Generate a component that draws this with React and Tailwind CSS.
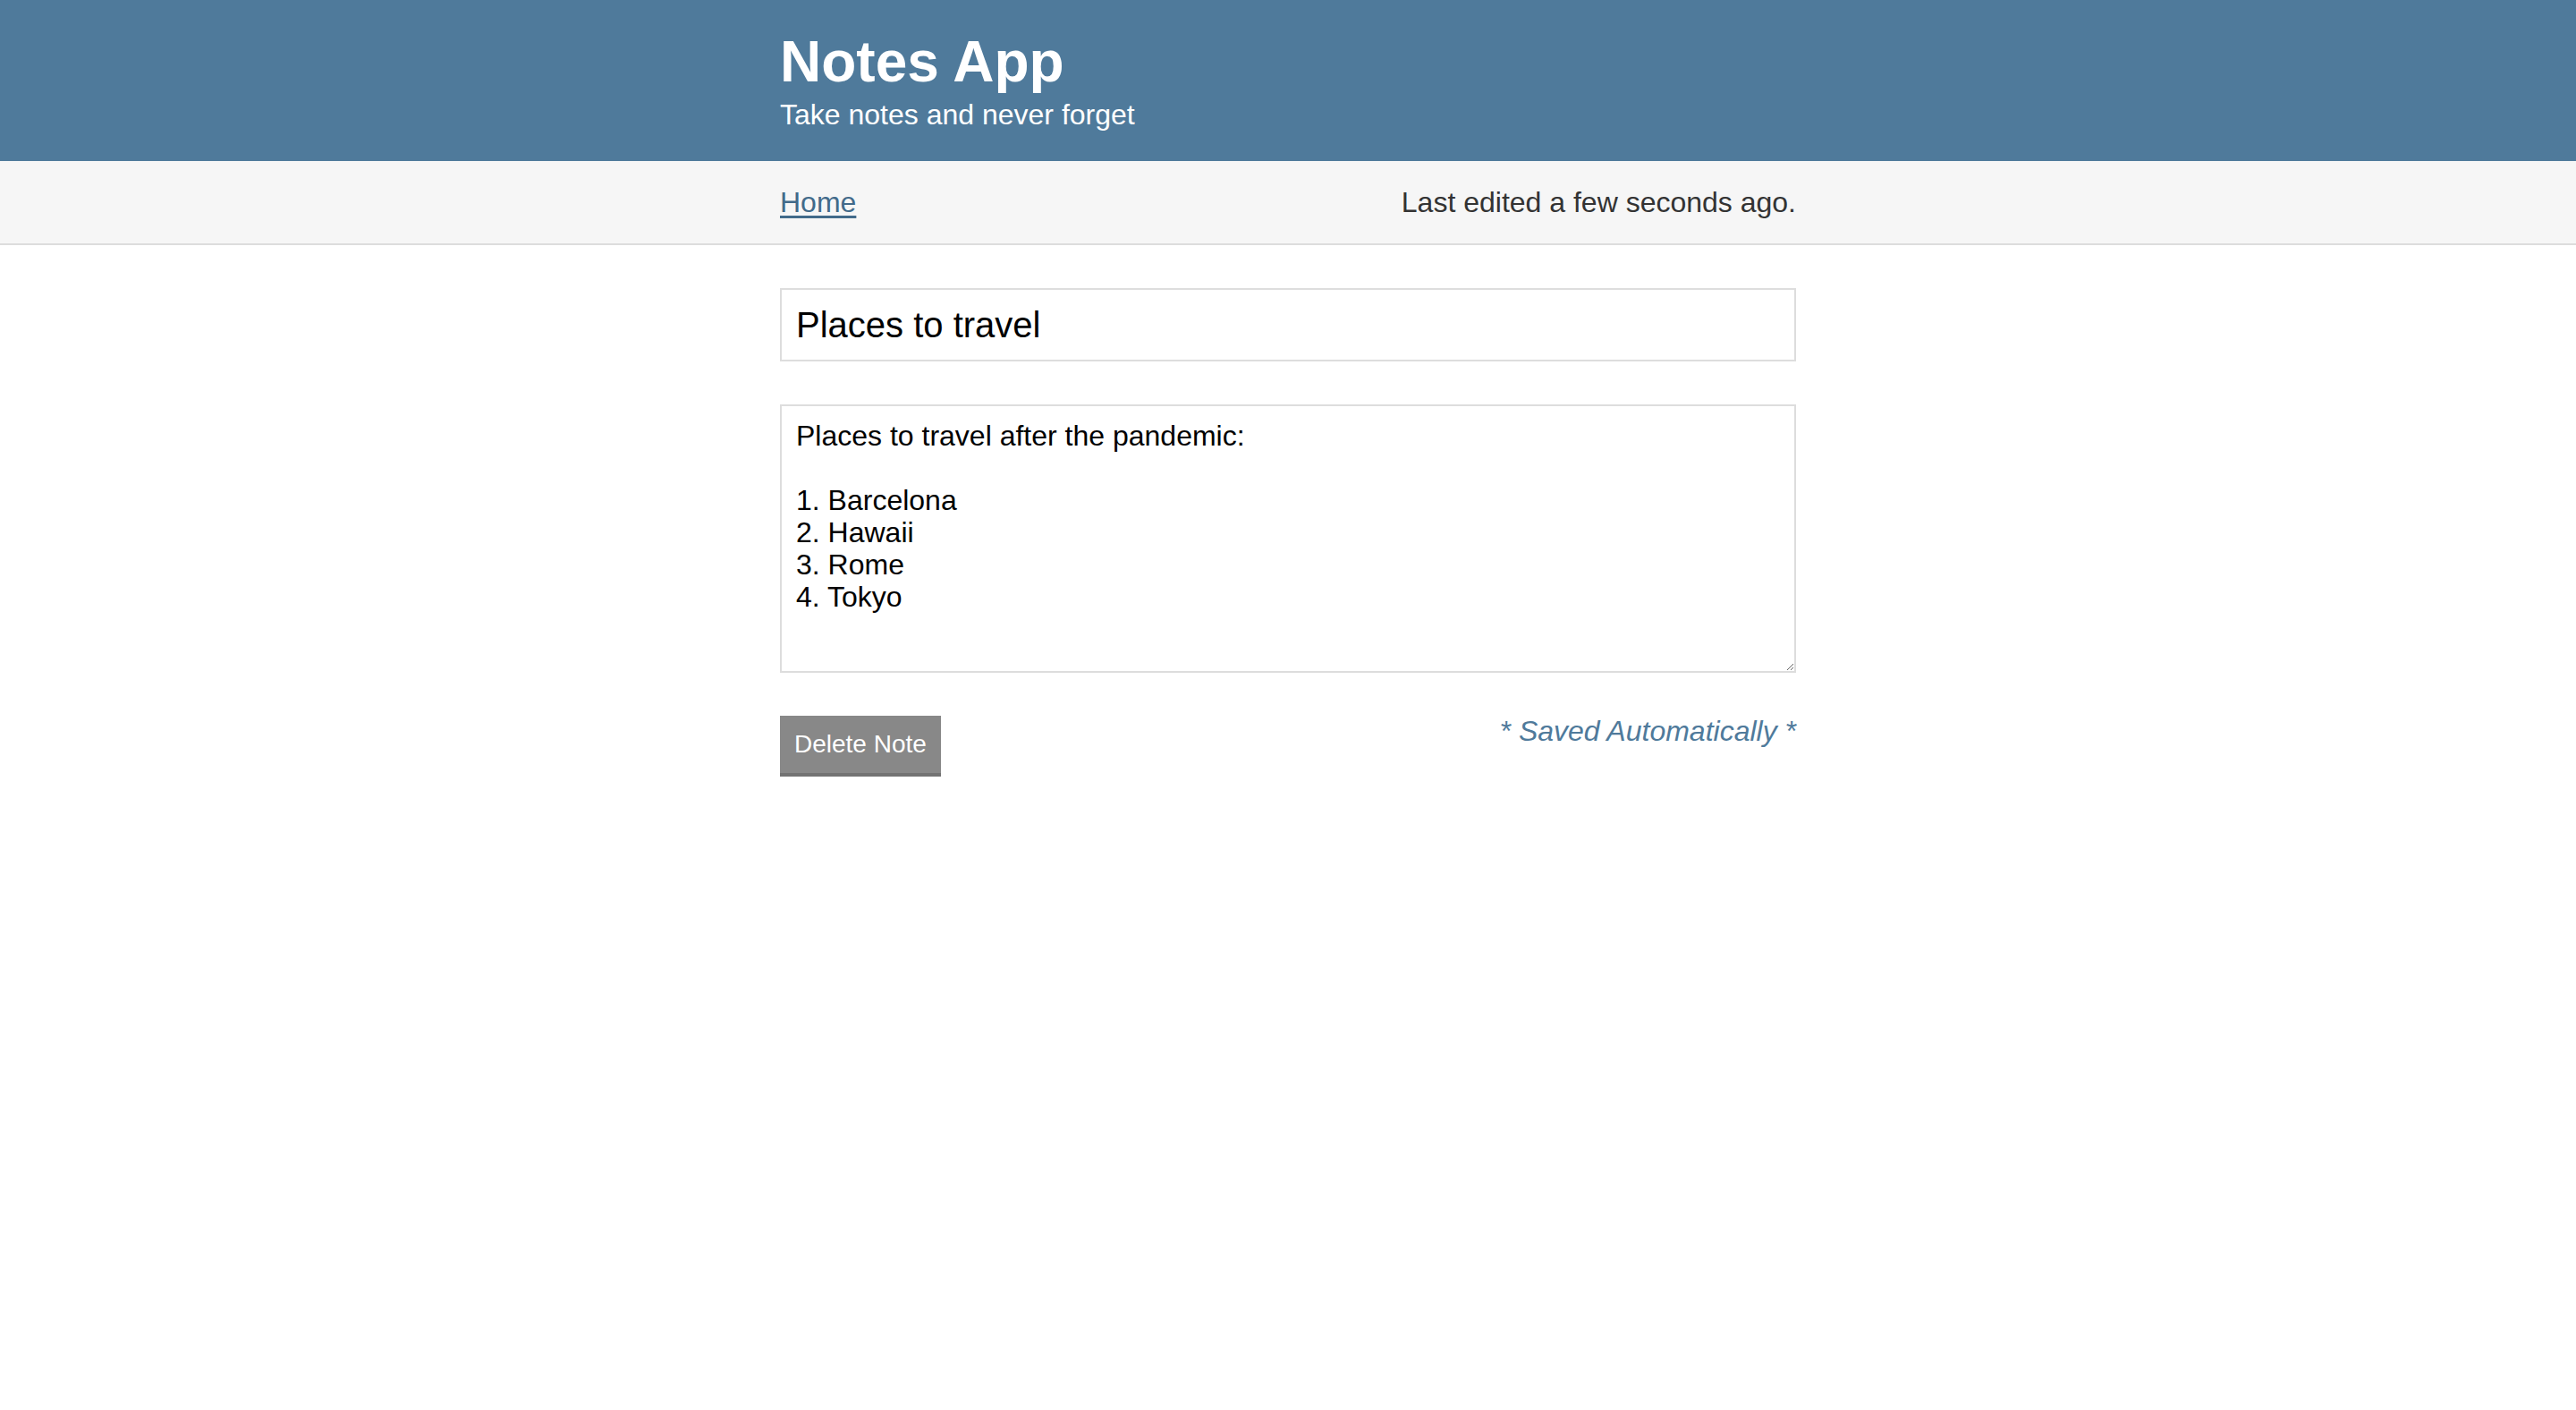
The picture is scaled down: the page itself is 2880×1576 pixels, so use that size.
import { useState } from "react";

const noteBody = `Places to travel after the pandemic:

1. Barcelona
2. Hawaii
3. Rome
4. Tokyo`;

export default function App() {
  const [title, setTitle] = useState("Places to travel");
  const [body, setBody] = useState(noteBody);

  return (
    <div className="min-h-screen bg-white font-['Liberation_Sans',Arial,sans-serif]">
      <header className="bg-[#4f7a9b] text-white pt-[33px] pb-[34px]">
        <div className="w-[1136px] mx-auto">
          <h1 className="text-[64px] leading-[72px] font-bold">Notes App</h1>
          <p className="text-[32px] leading-[36px] mt-[5px]">
            Take notes and never forget
          </p>
        </div>
      </header>

      <nav className="bg-[#f6f6f6] border-b-2 border-[#dddddd] pt-[28px] pb-[28px]">
        <div className="w-[1136px] mx-auto flex justify-between text-[32px] leading-[36px]">
          <a href="#" className="text-[#426a8a] underline underline-offset-[4px]">
            Home
          </a>
          <span className="text-[#333333]">Last edited a few seconds ago.</span>
        </div>
      </nav>

      <main className="w-[1136px] mx-auto pt-[48px] flex flex-col gap-[48px]">
        <input
          type="text"
          value={title}
          onChange={(e) => setTitle(e.target.value)}
          className="w-full h-[82px] border-2 border-[#dddddd] px-[16px] text-[40px] text-black outline-none"
        />
        <textarea
          value={body}
          onChange={(e) => setBody(e.target.value)}
          className="w-full h-[300px] border-2 border-[#dddddd] px-[16px] pt-[15px] text-[32px] leading-[36px] text-black outline-none"
        />
        <div className="flex justify-between items-start">
          <button className="bg-[#888888] border-b-4 border-[#737373] text-white text-[28px] leading-[32px] px-[16px] pt-[16px] pb-[16px]">
            Delete Note
          </button>
          <span className="italic text-[#4f7a9b] text-[32px] leading-[36px] -mt-[1px]">
            * Saved Automatically *
          </span>
        </div>
      </main>
    </div>
  );
}
